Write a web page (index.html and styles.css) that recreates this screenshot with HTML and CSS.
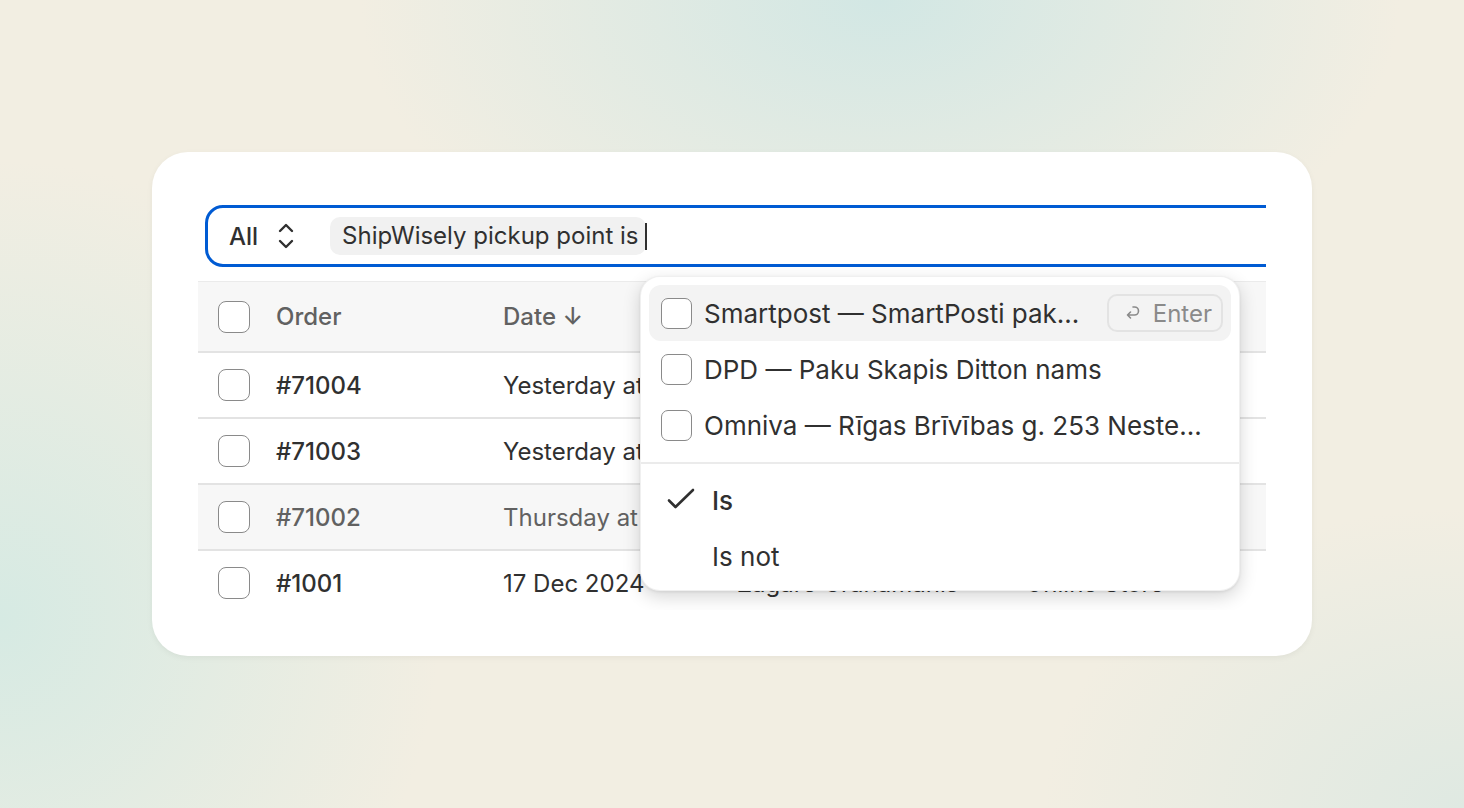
FILE: index.html
```html
<!DOCTYPE html>
<html lang="en">

<head>
    <meta charset="UTF-8">
    <title>Orders filter</title>
    <link rel="stylesheet" href="styles.css">
</head>

<body>
    <div class="card">
        <div class="viewport">
            <!-- search / filter bar -->
            <div class="search">
                <span class="scope">All</span>
                <svg class="updown" width="20" height="28" viewBox="0 0 20 28">
                    <path d="M4 9 L10 3 L16 9 M4 19 L10 25 L16 19" fill="none" stroke="#303030" stroke-width="2.4" stroke-linecap="round" stroke-linejoin="round" />
                </svg>
                <span class="chip">ShipWisely pickup point is</span>
                <span class="caret"></span>
            </div>

            <!-- orders table -->
            <div class="table">
                <div class="row head">
                    <span class="cell"><i class="box"></i></span>
                    <span>Order</span>
                    <span>Date ↓</span>
                    <span></span>
                    <span></span>
                </div>
                <div class="row">
                    <span class="cell"><i class="box"></i></span>
                    <span class="num">#71004</span>
                    <span class="date">Yesterday at 16:42</span>
                    <span></span>
                    <span></span>
                </div>
                <div class="row">
                    <span class="cell"><i class="box"></i></span>
                    <span class="num">#71003</span>
                    <span class="date">Yesterday at 11:05</span>
                    <span></span>
                    <span></span>
                </div>
                <div class="row dim">
                    <span class="cell"><i class="box"></i></span>
                    <span class="num">#71002</span>
                    <span class="date">Thursday at 18:20</span>
                    <span></span>
                    <span></span>
                </div>
                <div class="row">
                    <span class="cell"><i class="box"></i></span>
                    <span class="num">#1001</span>
                    <span class="date">17 Dec 2024</span>
                    <span>Zagare Granamanis</span>
                    <span>Online Store</span>
                </div>
            </div>

            <!-- dropdown -->
            <div class="menu">
                <div class="item active">
                    <i class="box"></i>
                    <span class="label">Smartpost — SmartPosti pak...</span>
                    <span class="enter">
                        <svg width="20" height="20" viewBox="0 0 20 20">
                            <path d="M10 4 h1.5 a4 4 0 0 1 0 8 H4.5 M7.5 9 L4.5 12 L7.5 15" fill="none" stroke="#8a8a8a" stroke-width="1.6" stroke-linecap="round" stroke-linejoin="round" />
                        </svg>
                        Enter
                    </span>
                </div>
                <div class="item">
                    <i class="box"></i>
                    <span class="label">DPD — Paku Skapis Ditton nams</span>
                </div>
                <div class="item">
                    <i class="box"></i>
                    <span class="label">Omniva — Rīgas Brīvības g. 253 Neste...</span>
                </div>
                <div class="sep"></div>
                <div class="item op">
                    <svg class="tick" width="39" height="28" viewBox="0 0 39 28">
                        <path d="M8 14.5 L14.5 21 L32 4" fill="none" stroke="#303030" stroke-width="2.6" stroke-linecap="round" stroke-linejoin="round" />
                    </svg>
                    <span class="label strong">Is</span>
                </div>
                <div class="item op">
                    <span class="tick"></span>
                    <span class="label">Is not</span>
                </div>
            </div>
        </div>
    </div>
</body>

</html>
```

FILE: styles.css
```css
* {
    margin: 0;
    padding: 0;
    box-sizing: border-box;
}

body {
    height: 808px;
    display: flex;
    align-items: center;
    justify-content: center;
    font-family: Inter, "Noto Sans", sans-serif;
    color: #303030;
    background:
        radial-gradient(ellipse 520px 320px at 880px 0px, #d2e7e4 0%, rgba(210, 231, 228, 0) 100%),
        radial-gradient(ellipse 440px 460px at 0px 620px, #d6eae3 0%, rgba(214, 234, 227, 0) 100%),
        radial-gradient(ellipse 420px 300px at 1464px 808px, #dfe9e2 0%, rgba(223, 233, 226, 0) 100%),
        #f2eee2;
}

.card {
    width: 1160px;
    height: 504px;
    padding: 46px;
    background: #fff;
    border-radius: 36px;
    box-shadow: 0 2px 6px rgba(0, 0, 0, 0.05);
}

.viewport {
    position: relative;
    height: 412px;
    overflow: hidden;
    padding-top: 7px;
}

/* search bar */
.search {
    width: 1200px;
    height: 62px;
    margin-left: 7px;
    border: 3px solid #005bd3;
    border-radius: 18px;
    display: flex;
    align-items: center;
    padding-left: 21px;
    font-size: 24px;
}

.scope {
    font-weight: 500;
}

.updown {
    margin-left: 18px;
}

.chip {
    margin-left: 34px;
    height: 38px;
    line-height: 38px;
    padding: 0 8px 0 12px;
    background: #f1f1f1;
    border-radius: 10px;
}

.caret {
    width: 2px;
    height: 27px;
    margin-left: -1px;
    background: #303030;
}

/* table */
.table {
    margin-top: 14px;
    width: 1200px;
    border-top: 1px solid #ebebeb;
}

.row {
    display: grid;
    grid-template-columns: 78px 227px 234px 288px 1fr;
    align-items: center;
    height: 66px;
    border-bottom: 2px solid #e3e3e3;
    font-size: 24px;
    white-space: nowrap;
}

.row.head {
    height: 71px;
    background: #f7f7f7;
    color: #616161;
    font-weight: 500;
}

.row.dim {
    background: #f7f7f7;
    color: #616161;
}

.row .num {
    font-weight: 500;
}

.row .date {
    overflow: hidden;
}

.cell {
    padding-left: 20px;
    display: flex;
}

.box {
    display: block;
    width: 32px;
    height: 32px;
    border: 1.5px solid #8a8a8a;
    border-radius: 8px;
    background: #fff;
}

/* dropdown */
.menu {
    position: absolute;
    left: 442px;
    top: 78px;
    width: 600px;
    height: 315px;
    padding: 8px;
    background: #fff;
    border-radius: 20px;
    border: 1px solid rgba(0, 0, 0, 0.06);
    box-shadow: 0 6px 18px rgba(0, 0, 0, 0.16), 0 1px 3px rgba(0, 0, 0, 0.08);
}

.menu .item {
    display: flex;
    align-items: center;
    height: 56px;
    padding: 0 8px 0 12px;
    border-radius: 12px;
    font-size: 26px;
    white-space: nowrap;
}

.menu .item.active {
    background: #f3f3f3;
}

.menu .box {
    width: 31px;
    height: 31px;
    border-radius: 7px;
    flex: none;
}

.menu .label {
    margin-left: 12px;
}

.menu .strong {
    font-weight: 500;
}

.tick {
    display: block;
    width: 39px;
    flex: none;
}

.enter {
    margin-left: auto;
    height: 38px;
    display: flex;
    align-items: center;
    gap: 10px;
    padding: 0 9px 0 14px;
    border: 2px solid #e3e3e3;
    border-radius: 10px;
    color: #8a8a8a;
    font-size: 24px;
}

.sep {
    height: 2px;
    margin: 9px -8px 8px;
    background: #ebebeb;
}
```
